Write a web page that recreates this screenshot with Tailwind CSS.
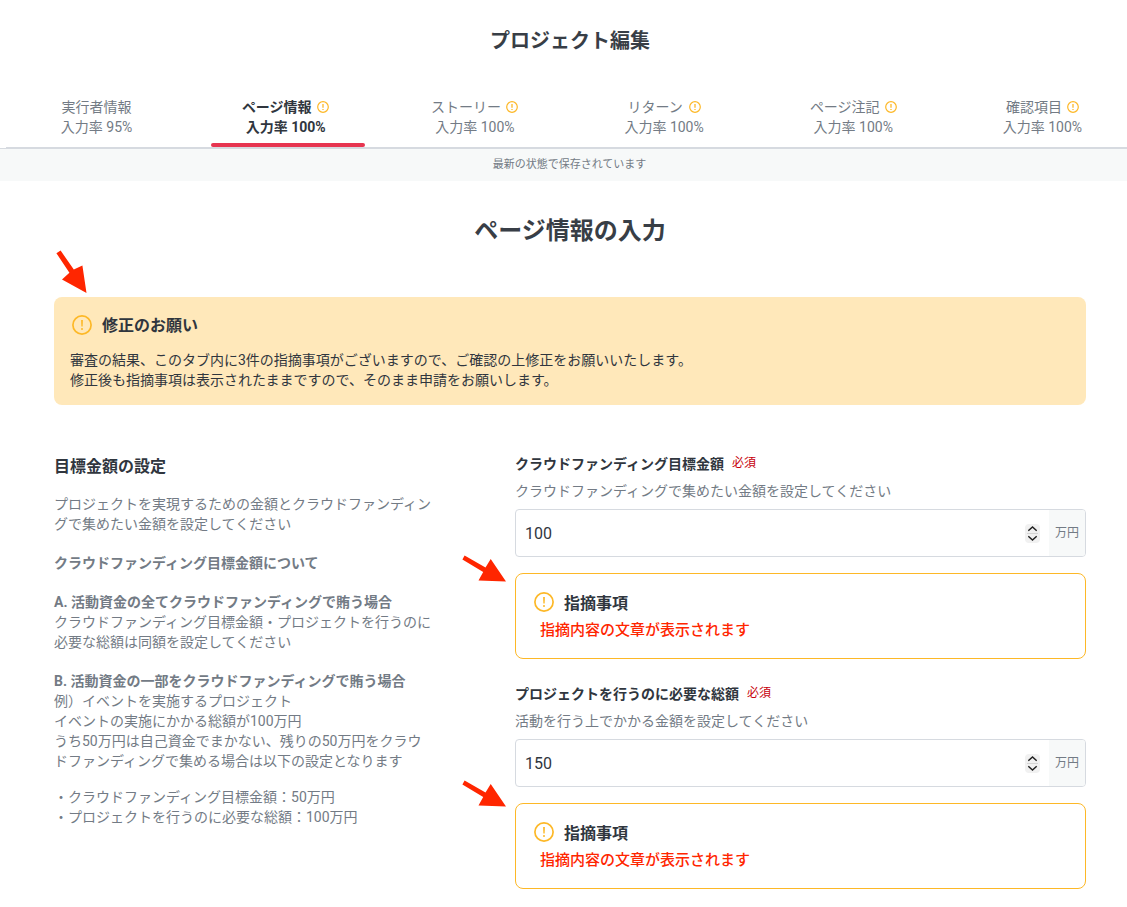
<!DOCTYPE html>
<html lang="ja">
<head>
  <meta charset="UTF-8" />
  <meta name="viewport" content="width=device-width, initial-scale=1" />
  <title>プロジェクト編集</title>
  <script src="https://cdn.jsdelivr.net/npm/@tailwindcss/browser@4"></script>
</head>
<body class="relative h-[907px] overflow-hidden bg-white font-[Roboto,'Noto_Sans_CJK_JP',sans-serif] text-sm leading-5 text-[#737b85]">

  <!-- Shared icons -->
  <svg class="hidden">
    <symbol id="alert" viewBox="0 0 20 20">
      <circle cx="10" cy="10" r="9.1" fill="none" stroke="#fdb827" stroke-width="1.7" />
      <path d="M9.1 5h1.8l-.25 6.6h-1.3z" fill="#fdb827" />
      <circle cx="10" cy="14" r="1" fill="#fdb827" />
    </symbol>
    <symbol id="alert-small" viewBox="0 0 12 12">
      <circle cx="6" cy="6" r="5.3" fill="none" stroke="#fdb827" stroke-width="1.2" />
      <path d="M6 3v3.8M6 7.9v1.2" stroke="#fdb827" stroke-width="1.3" />
    </symbol>
    <symbol id="spinner" viewBox="0 0 15 19">
      <rect width="15" height="19" rx="4" fill="#f1f1f1" />
      <path d="M2 9.5h11" stroke="#d4d4d4" />
      <path d="M3.3 6.8 7.5 3l4.2 3.8M3.3 12.2 7.5 16l4.2-3.8" fill="none" stroke="#222" stroke-width="1.5" />
    </symbol>
    <symbol id="arrow" viewBox="0 0 44 28">
      <path d="M2.6.6 23.5 12.4 28.7 4 44 26.6 16.5 25.4 21.2 17 .4 4.6z" fill="#ff2600" />
    </symbol>
  </svg>

  <header>
    <h1 class="pt-[27px] pl-[13px] text-center text-xl leading-7 font-bold text-[#383e46]">プロジェクト編集</h1>
    <nav class="mt-[42px] ml-[2px] grid h-[50px] w-[1135px] grid-cols-6 text-center">
      <a>
        <div>実行者情報</div>
        <div>入力率 95%</div>
      </a>
      <a class="relative font-bold text-[#30363e]">
        <div class="flex items-center justify-center gap-[5px] pr-px">ページ情報<svg class="size-3"><use href="#alert-small" /></svg></div>
        <div>入力率 100%</div>
        <span class="absolute bottom-0 left-5 h-1 w-[154px] rounded-full bg-[#e73550]"></span>
      </a>
      <a>
        <div class="flex items-center justify-center gap-[5px] pr-px">ストーリー<svg class="size-3"><use href="#alert-small" /></svg></div>
        <div>入力率 100%</div>
      </a>
      <a>
        <div class="flex items-center justify-center gap-1.5">リターン<svg class="size-3"><use href="#alert-small" /></svg></div>
        <div>入力率 100%</div>
      </a>
      <a>
        <div class="flex items-center justify-center gap-[5px]">ページ注記<svg class="size-3"><use href="#alert-small" /></svg></div>
        <div>入力率 100%</div>
      </a>
      <a>
        <div class="flex items-center justify-center gap-[5px]">確認項目<svg class="size-3"><use href="#alert-small" /></svg></div>
        <div>入力率 100%</div>
      </a>
    </nav>
    <div class="ml-1.5 h-px bg-[#d6dae0]"></div>
    <p class="h-[33px] border-t border-[#d6dae0] bg-[#f7f9f9] pl-3 text-center text-[11px] leading-8">最新の状態で保存されています</p>
  </header>

  <main class="ml-[54px] w-[1032px]">
    <h2 class="pt-8 text-center text-2xl leading-9 font-bold text-[#383e46]">ページ情報の入力</h2>

    <section class="mt-12 h-[108px] rounded-lg bg-[#ffe8ba] px-4 pt-[17px] text-[#30363e]">
      <h3 class="flex items-start gap-2.5 pl-0.5 text-base leading-6 font-bold">
        <svg class="mt-px size-5"><use href="#alert" /></svg>修正のお願い
      </h3>
      <p class="mt-3">審査の結果、このタブ内に3件の指摘事項がございますので、ご確認の上修正をお願いいたします。<br>修正後も指摘事項は表示されたままですので、そのまま申請をお願いします。</p>
    </section>

    <div class="mt-12 flex justify-between">
      <section class="w-[380px]">
        <h3 class="pt-0.5 text-base leading-6 font-bold text-[#30363e]">目標金額の設定</h3>
        <p class="mt-[15px]">プロジェクトを実現するための金額とクラウドファンディン<br>グで集めたい金額を設定してください</p>
        <p class="mt-[19px] font-bold">クラウドファンディング目標金額について</p>
        <p class="mt-[19px]"><b>A. 活動資金の全てクラウドファンディングで賄う場合</b><br>クラウドファンディング目標金額・プロジェクトを行うのに<br>必要な総額は同額を設定してください</p>
        <p class="mt-[19px]"><b>B. 活動資金の一部をクラウドファンディングで賄う場合</b><br>例）イベントを実施するプロジェクト<br>イベントの実施にかかる総額が100万円<br>うち50万円は自己資金でまかない、残りの50万円をクラウ<br>ドファンディングで集める場合は以下の設定となります</p>
        <p class="mt-4">・クラウドファンディング目標金額：50万円<br>・プロジェクトを行うのに必要な総額：100万円</p>
      </section>

      <section class="w-[571px]">
        <div class="h-[230px]">
          <label class="flex gap-2 pt-px font-bold text-[#30363e]">クラウドファンディング目標金額<span class="text-xs leading-[18px] font-normal text-[#c7000b]">必須</span></label>
          <p class="mt-[7px]">クラウドファンディングで集めたい金額を設定してください</p>
          <div class="mt-2 flex h-12 items-center overflow-hidden rounded border border-[#d6dae0]">
            <input type="text" value="100" class="min-w-0 flex-1 pt-0.5 pl-[9px] text-base text-[#30363e] outline-none" />
            <svg class="mr-[9px] h-[19px] w-[15px]"><use href="#spinner" /></svg>
            <span class="flex h-full w-9 items-center justify-center bg-[#f7f9f9] text-xs">万円</span>
          </div>
          <div class="mt-4 h-[86px] rounded-lg border border-[#fdb827] px-[18px] pt-[18px]">
            <h4 class="flex items-start gap-2.5 text-base leading-6 font-bold text-[#30363e]"><svg class="size-5"><use href="#alert" /></svg>指摘事項</h4>
            <p class="mt-1 pl-1.5 text-[15px] font-medium text-[#ff2600]">指摘内容の文章が表示されます</p>
          </div>
        </div>

        <div class="h-[230px]">
          <label class="flex gap-2 pt-px font-bold text-[#30363e]">プロジェクトを行うのに必要な総額<span class="text-xs leading-[18px] font-normal text-[#c7000b]">必須</span></label>
          <p class="mt-[7px]">活動を行う上でかかる金額を設定してください</p>
          <div class="mt-2 flex h-12 items-center overflow-hidden rounded border border-[#d6dae0]">
            <input type="text" value="150" class="min-w-0 flex-1 pt-0.5 pl-[9px] text-base text-[#30363e] outline-none" />
            <svg class="mr-[9px] h-[19px] w-[15px]"><use href="#spinner" /></svg>
            <span class="flex h-full w-9 items-center justify-center bg-[#f7f9f9] text-xs">万円</span>
          </div>
          <div class="mt-4 h-[86px] rounded-lg border border-[#fdb827] px-[18px] pt-[18px]">
            <h4 class="flex items-start gap-2.5 text-base leading-6 font-bold text-[#30363e]"><svg class="size-5"><use href="#alert" /></svg>指摘事項</h4>
            <p class="mt-1 pl-1.5 text-[15px] font-medium text-[#ff2600]">指摘内容の文章が表示されます</p>
          </div>
        </div>
      </section>
    </div>
  </main>

  <!-- Red pointers laid over the page -->
  <svg class="absolute top-[250px] left-[56px] h-[44px] w-[32px]" viewBox="0 0 32 44"><path d="M4.6.6 17.8 19.4 26.4 15.5 30.5 43 6 29.4 13.4 22.8.4 3.2z" fill="#ff2600" /></svg>
  <svg class="absolute top-[555px] left-[462px] h-[28px] w-[44px]"><use href="#arrow" /></svg>
  <svg class="absolute top-[780px] left-[462px] h-[28px] w-[44px]"><use href="#arrow" /></svg>
</body>
</html>
